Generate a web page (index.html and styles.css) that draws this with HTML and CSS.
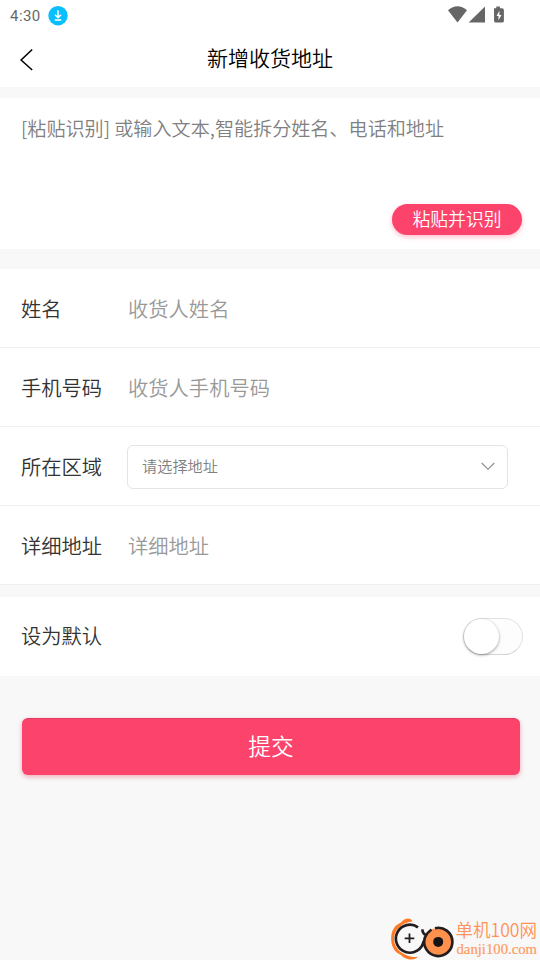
FILE: index.html
```html
<!DOCTYPE html>
<html lang="zh-CN">
<head>
<meta charset="utf-8">
<title>新增收货地址</title>
<link rel="stylesheet" href="styles.css">
</head>
<body>
<div class="status">
  <span class="time">4:30</span>
  <svg class="download" width="20" height="20" viewBox="0 0 20 20"><circle cx="10" cy="9.7" r="9.7" fill="#09bfff"/><path d="M10 4.300v7.400M7 8.800l3 3 3-3M6.700 14.100h6.600" fill="none" stroke="#fff" stroke-width="1.500"/></svg>
  <svg class="signals" width="58" height="20" viewBox="0 0 58 20" fill="#666">
    <path d="M0 4.200Q9.500-3.500 19 4.200L9.500 16.400Z"/>
    <path d="M37 .5V16.500H20.700Z"/>
    <path d="M46 2.300h2.300V.4h3.600v1.900H54q1.900 0 1.900 1.600v11q0 1.700-1.700 1.700h-6.400q-1.700 0-1.700-1.700Z"/>
    <path d="M51.400 4.800 48.500 10h2v4.300l3-5.400h-2.100Z" fill="#fff"/>
  </svg>
</div>
<header class="header">
  <svg class="back" width="16" height="24" viewBox="0 0 16 24"><path d="M13.200 1.500 2.100 12 13.200 22" fill="none" stroke="#000" stroke-width="1.500"/></svg>
  <h1>新增收货地址</h1>
</header>
<section class="paste">
  <p>[粘贴识别] 或输入文本,智能拆分姓名、电话和地址</p>
  <button class="pill">粘贴并识别</button>
</section>
<section class="form">
  <div class="row"><label>姓名</label><span class="hint">收货人姓名</span></div>
  <div class="row"><label>手机号码</label><span class="hint">收货人手机号码</span></div>
  <div class="row"><label>所在区域</label>
    <div class="select"><span>请选择地址</span><svg width="14" height="9" viewBox="0 0 14 9"><path d="M.7 1 7 7.300 13.300 1" fill="none" stroke="#888" stroke-width="1.100"/></svg></div>
  </div>
  <div class="row"><label>详细地址</label><span class="hint">详细地址</span></div>
</section>
<section class="default"><label>设为默认</label><div class="switch"><i></i></div></section>
<button class="submit">提交</button>
<svg class="brand" width="150" height="43" viewBox="0 0 150 43">
  <path d="M22.500 4.500C21 .5 15 .5 11 5.500C3 9 1.200 15 1.200 22C1.200 31 6 36 11 38C15 43 24 44 28 40C16 41 4 33 4 22C4 13 11 6 22.500 4.500Z" fill="#ff7a24"/>
  <circle cx="19.300" cy="21.300" r="14" fill="#f8f8f8"/>
  <path d="M28 10.300A14 14 0 1 0 33.700 24" fill="none" stroke="#241d20" stroke-width="2.700"/>
  <circle cx="48.200" cy="25" r="14" fill="#ff914d"/>
  <path d="M45 11.200A14.100 14.100 0 1 1 34.900 20.500Q37 15.500 41.500 12.500M32.300 12.300Q32.800 17.300 36.500 18" fill="none" stroke="#241d20" stroke-width="2.700"/>
  <circle cx="48.200" cy="24.900" r="5" fill="#161316"/>
  <path d="M19.500 16.500v9.500M14.700 21.300h9.600" stroke="#241d20" stroke-width="1.800"/>
  <text x="65.500" y="20.300" class="brand-name" textLength="81.500" lengthAdjust="spacingAndGlyphs">单机100网</text>
  <text x="66.500" y="37" class="brand-url" textLength="80.500" lengthAdjust="spacingAndGlyphs">danji100.com</text>
</svg>
</body>
</html>
```
FILE: styles.css
```css
* { box-sizing: border-box; }
body {
  margin: 0;
  height: 960px;
  overflow: hidden;
  position: relative;
  background: #f8f8f8;
  color: #333;
  font-family: "Noto Sans CJK SC", sans-serif;
  font-weight: 350;
}
button {
  border: 0;
  padding: 0;
  font-family: inherit;
  font-weight: inherit;
  color: #fff;
  background: #fb436b;
}
.status {
  height: 32px;
  background: #fff;
  display: flex;
  align-items: flex-start;
  padding: 6px 34px 0 10px;
}
.time {
  width: 38px;
  font-family: Roboto, sans-serif;
  font-weight: 400;
  font-size: 15px;
  line-height: 20px;
  letter-spacing: .45px;
  color: #666;
}
.signals { margin-left: auto; }
.header {
  height: 55px;
  background: #fff;
  display: grid;
  grid-template-columns: 40px 1fr 40px;
  align-items: center;
}
.back { margin-left: 19px; }
h1 {
  margin: 0;
  padding-bottom: 5px;
  font-size: 21px;
  font-weight: inherit;
  line-height: 30px;
  text-align: center;
  color: #000;
}
.paste {
  margin-top: 11px;
  height: 151px;
  padding: 15px 18px 14px 21px;
  background: #fff;
  display: flex;
  flex-direction: column;
  justify-content: space-between;
}
.paste p {
  margin: 0;
  font-size: 19.1px;
  line-height: 30px;
  color: #808080;
  white-space: nowrap;
}
.pill {
  align-self: flex-end;
  width: 130px;
  height: 31px;
  border-radius: 16px;
  font-size: 17.8px;
  line-height: 29px;
  padding-bottom: 2px;
  box-shadow: 0 2px 5px rgba(251, 67, 107, .35);
}
.form { margin-top: 20px; }
.row {
  height: 79px;
  padding: 0 32px 0 21px;
  background: #fff;
  border-bottom: 1px solid #f0f0f0;
  display: flex;
  align-items: center;
}
label {
  width: 106px;
  font-size: 20.3px;
  line-height: 30px;
}
.row label, .hint { padding-bottom: 1px; }
.hint {
  padding-left: 1px;
  font-size: 20.3px;
  line-height: 30px;
  color: #999;
}
.select {
  flex: 1;
  height: 44px;
  margin-top: 1px;
  padding: 0 12px 0 14px;
  border: 1px solid #e4e4e4;
  border-radius: 6px;
  display: flex;
  align-items: center;
  justify-content: space-between;
  font-size: 15.2px;
  color: #808080;
}
.select span { padding-bottom: 4px; }
.default {
  margin-top: 12px;
  height: 79px;
  padding: 0 17px 0 21px;
  background: #fff;
  display: flex;
  align-items: center;
  justify-content: space-between;
}
.default label { padding-bottom: 4px; }
.switch {
  width: 60px;
  height: 37px;
  border: 1px solid #e2e2e2;
  border-bottom-color: #d4d4d4;
  border-radius: 19px;
  background: #fdfdfd;
}
.switch i {
  display: block;
  width: 35px;
  height: 35px;
  border-radius: 50%;
  background: #fff;
  box-shadow: 0 1px 3px rgba(0, 0, 0, .4);
}
.submit {
  display: block;
  width: 498px;
  height: 57px;
  margin: 42px 20px 0 22px;
  padding-bottom: 2px;
  border-radius: 6px;
  border-top: 1px solid #e23c60;
  font-size: 22.7px;
  line-height: 54px;
  box-shadow: 0 2px 5px rgba(226, 60, 96, .4);
}
.brand {
  position: absolute;
  left: 390px;
  top: 917px;
}
.brand-name {
  font: 350 18px "Noto Sans CJK SC", sans-serif;
  fill: #ff9256;
}
.brand-url {
  font: 15px "Liberation Serif", serif;
  fill: #ff9b62;
  stroke: #ff9b62;
  stroke-width: .2;
}
```
